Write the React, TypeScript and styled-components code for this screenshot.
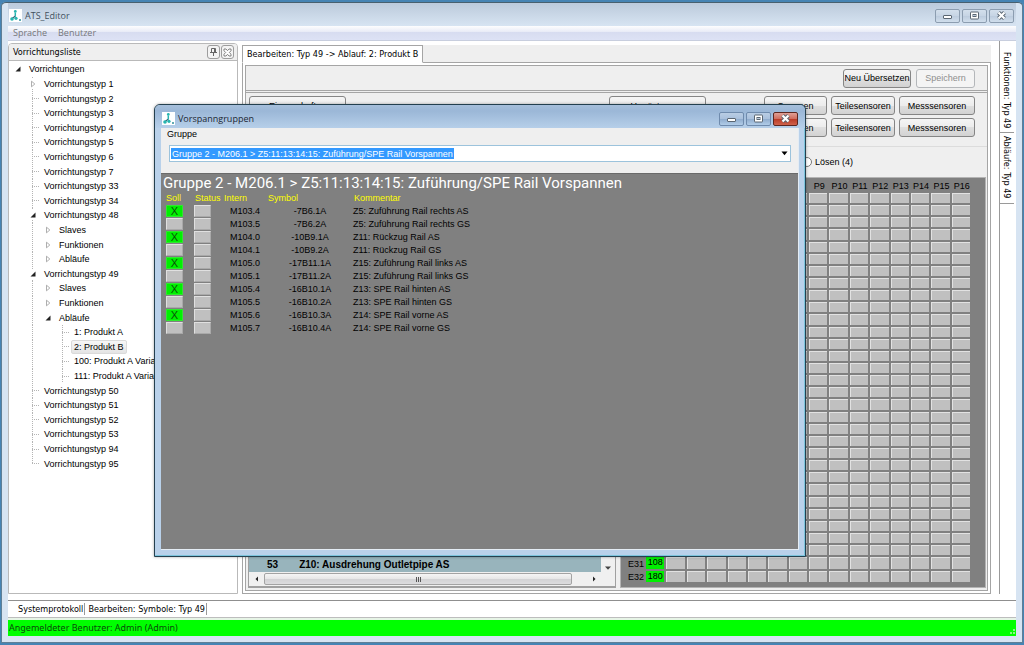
import React from "react";
import styled, { createGlobalStyle, css } from "styled-components";

const sans = `"Liberation Sans", Arial, sans-serif`;
const tahoma = `"DejaVu Sans Condensed", "DejaVu Sans", sans-serif`;
const segoe = `"Open Sans", "Noto Sans", sans-serif`;

const GlobalStyle = createGlobalStyle`
  *, *::before, *::after { box-sizing: border-box; }
  body { margin: 0; background: #4684b4; font: 9px/12px ${sans}; color: #000; }
  button, select, input { font: inherit; color: inherit; margin: 0; }
  ul { list-style: none; margin: 0; padding: 0; }
`;

/* ---------- main window ---------- */

const MainWindow = styled.div`
  position: relative;
  display: flex;
  flex-direction: column;
  min-height: 100vh;
  padding: 0 7px 7px 7px;
  border: solid #4684b4;
  border-width: 2px 1px 2px 1px;
  background: #d7e4f2;
  box-shadow: inset 0 1px 0 #48606f, inset 1px 0 0 #5f7f96, inset -1px 0 0 #5f7f96, inset 0 -1px 0 #5f7f96;
  border-radius: 6px 6px 0 0;
`;

const TitleBar = styled.header<{ $dialog?: boolean }>`
  display: flex;
  align-items: center;
  flex: none;
  gap: 3px;
  height: 23px;
  padding: 2px 2px 0 1px;
  font: 9px/14px ${segoe};
  color: #41505c;
  background: linear-gradient(#bccbdd 1px, #c5d3e3 8px, #d7e4f2);
  margin-top: 1px;
  ${(p) =>
    p.$dialog &&
    css`
      margin: 0 -6px;
      padding: 4px 7px 0 7px;
      color: #1c2733;
      border-radius: 5px 5px 0 0;
      background: linear-gradient(#a6bfdb, #9bb7d7 6px, #b6cfe9);
    `}
`;

const Title = styled.h1`
  flex: 1;
  margin: 0;
  font: inherit;
`;

const CaptionButtons = styled.div`
  display: flex;
  gap: 2px;
`;

const CaptionButton = styled.button<{ $dialog?: boolean; $close?: boolean }>`
  display: flex;
  align-items: center;
  justify-content: center;
  width: 25px;
  height: 14px;
  padding: 0;
  border: 1px solid #8c9db0;
  border-radius: 2px;
  background: linear-gradient(#d3dfec, #c6d4e4 50%, #bccbdd 50%, #d0deec);
  ${(p) =>
    p.$dialog &&
    css`
      border-color: #6f8bad;
      background: linear-gradient(#b9cde4, #a9c0dc 50%, #8fabcd 50%, #b1cce8);
    `}
  ${(p) =>
    p.$close &&
    css`
      border-color: #5d2720;
      background: linear-gradient(#e0a096, #cf6b5c 50%, #b93a26 50%, #d0624b);
    `}
`;

const MenuBar = styled.nav`
  display: flex;
  flex: none;
  gap: 11px;
  height: 15px;
  padding-left: 5px;
  background: linear-gradient(#fdfdfe, #e9ecf7 40%, #d7dcf0 42%, #dde2f5);
  border-bottom: 1px solid #c8cede;
`;

const MenuItem = styled.button`
  padding: 0;
  border: 0;
  background: none;
  font: 9px/14px ${segoe};
  color: #76777b;
`;

const Workspace = styled.main`
  display: flex;
  flex: 1;
  min-height: 0;
  background: #fff;
  padding-bottom: 6px;
`;

/* ---------- left: device list ---------- */

const DevicePanel = styled.section`
  display: flex;
  flex-direction: column;
  flex: none;
  width: 230px;
  margin: 2px 0 0;
  border: 1px solid #b9b9b9;
  border-radius: 4px 4px 0 0;
  background: #fff;
`;

const PanelHeader = styled.div`
  display: flex;
  align-items: center;
  flex: none;
  gap: 1px;
  height: 17px;
  padding: 0 3px 0 4px;
  border-bottom: 1px solid #b9b9b9;
  border-radius: 3px 3px 0 0;
  background: #efefef;
  font: 9px/14px ${tahoma};
`;

const PanelTitle = styled.h2`
  flex: 1;
  margin: 0;
  font: inherit;
`;

const PanelButton = styled.button`
  display: flex;
  align-items: center;
  justify-content: center;
  width: 13px;
  height: 14px;
  padding: 0;
  border: 1px solid #9d9d9d;
  border-radius: 3px;
  background: #f4f4f4;
`;

const Tree = styled.ul`
  display: grid;
  grid-auto-rows: 1fr;
  height: 410px;
  padding: 1px 0 0 5px;
`;

const TreeRow = styled.li<{ $level: number }>`
  display: flex;
  align-items: center;
  padding-left: ${(p) => (p.$level < 3 ? p.$level * 15 : 45)}px;
  white-space: nowrap;
  ${(p) =>
    p.$level > 0 &&
    css`
      background: repeating-linear-gradient(#b4b4b4 0 1px, #fff 1px 2px) 18px 0 / 1px 100% no-repeat;
    `}
  ${(p) =>
    p.$level > 2 &&
    css`
      background:
        repeating-linear-gradient(#b4b4b4 0 1px, #fff 1px 2px) 18px 0 / 1px 100% no-repeat,
        repeating-linear-gradient(#b4b4b4 0 1px, #fff 1px 2px) 48px 0 / 1px 100% no-repeat;
    `}
  &:last-child { background-size: 1px 50%; }
`;

const TreeMark = styled.span<{ $leaf: boolean }>`
  display: flex;
  align-items: center;
  justify-content: center;
  flex: none;
  width: 8px;
  height: 10px;
  margin-right: 4px;
  ${(p) =>
    p.$leaf
      ? css`
          margin-left: 3px;
          margin-right: 1px;
          background: repeating-linear-gradient(90deg, #b4b4b4 0 1px, #fff 1px 2px) 0 50% / 100% 1px no-repeat;
        `
      : css`
          background: #fff;
        `}
`;

const TreeLabel = styled.button<{ $selected?: boolean }>`
  height: 14px;
  padding: 0 2px;
  border: 1px solid ${(p) => (p.$selected ? "#dadada" : "transparent")};
  border-radius: 2px;
  background: ${(p) => (p.$selected ? "linear-gradient(#f7f7f7, #e4e4e4)" : "none")};
  line-height: 12px;
`;

/* ---------- centre: editor ---------- */

const Editor = styled.section`
  display: flex;
  flex: 1;
  flex-direction: column;
  min-width: 0;
  margin: 4px 8px 0 4px;
`;

const TabStrip = styled.div`
  display: flex;
  flex: none;
  height: 18px;
  border-bottom: 1px solid #a5a5a5;
  background: #efefef;
`;

const Tab = styled.button`
  height: 18px;
  padding: 0 4px;
  border: 1px solid #a5a5a5;
  border-bottom-color: #fff;
  background: #fff;
  font: 9px/14px ${tahoma};
`;

const TabPage = styled.div`
  display: flex;
  flex: 1;
  flex-direction: column;
  padding: 2px;
  border: 1px solid #a5a5a5;
  border-top: 0;
`;

const PageFrame = styled.div`
  display: flex;
  flex: 1;
  flex-direction: column;
  border: 1px solid #a5a5a5;
  background: #efefef;
`;

const Toolbar = styled.div`
  display: flex;
  align-items: center;
  justify-content: flex-end;
  flex: none;
  gap: 5px;
  height: 27px;
  padding-right: 12px;
  border-bottom: 3px double #a5a5a5;
`;

const PushButton = styled.button<{ $width: number }>`
  width: ${(p) => p.$width}px;
  height: 19px;
  padding: 0;
  border: 1px solid #858585;
  border-radius: 3px;
  background: linear-gradient(#f5f5f5, #ececec 50%, #dfdfdf 50%, #d2d2d2);
  line-height: 16px;
  white-space: nowrap;
  &:disabled {
    border-color: #b4b7ba;
    background: #f4f4f4;
    color: #8e8e8e;
  }
`;

const Actions = styled.div`
  flex: none;
  padding-top: 3px;
  height: 53px;
`;

const ActionRow = styled.div`
  display: flex;
  align-items: flex-start;
  gap: 4px;
  height: 22px;
  padding: 0 12px 0 3px;
`;

const ActionSpacer = styled.span<{ $width?: number }>`
  flex: ${(p) => (p.$width ? `0 0 ${p.$width}px` : "1")};
`;

const ModeGroup = styled.fieldset`
  display: flex;
  justify-content: flex-end;
  flex: none;
  height: 31px;
  margin: 0;
  padding: 9px 134px 0 0;
  border: 0;
  border-top: 1px solid #dcdcdc;
`;

const RadioLabel = styled.label`
  display: flex;
  align-items: center;
  gap: 3px;
`;

const Radio = styled.input`
  width: 10px;
  height: 10px;
  accent-color: #444;
`;

const Split = styled.div`
  display: flex;
  flex: 1;
  gap: 4px;
  padding: 0 1px 2px 2px;
`;

const StepPane = styled.div`
  display: flex;
  flex: 1;
  flex-direction: column;
  justify-content: flex-end;
  min-width: 0;
  border: solid #a0a0a0;
  border-width: 1px 1px 2px 1px;
  background: #f0f0f0;
`;

const StepRow = styled.div`
  display: flex;
  flex: 1;
`;

const StepList = styled.ul`
  display: flex;
  flex: 1;
  flex-direction: column;
  justify-content: flex-end;
  background: #98b4bc;
`;

const Step = styled.li`
  display: flex;
  gap: 21px;
  padding-left: 18px;
  font: bold 10px/14px ${sans};
`;

const VerticalScroll = styled.div`
  display: flex;
  align-items: flex-end;
  justify-content: center;
  flex: none;
  width: 14px;
  background: #f0f0f0;
`;

const HorizontalScroll = styled.div`
  display: flex;
  align-items: center;
  flex: none;
  height: 14px;
  padding-right: 14px;
`;

const ScrollArrow = styled.button`
  display: flex;
  align-items: center;
  justify-content: center;
  width: 15px;
  height: 12px;
  padding: 0;
  border: 0;
  background: none;
`;

const ScrollThumb = styled.div`
  display: flex;
  align-items: center;
  justify-content: center;
  flex: 1;
  height: 12px;
  margin-right: 14px;
  border: 1px solid #a3a3a3;
  border-radius: 2px;
  background: linear-gradient(#f5f5f5, #e6e6e6 50%, #d2d2d4 50%, #dcdcde);
`;

const MatrixPane = styled.div`
  flex: none;
  width: 366px;
  border: 1px solid #b4b4b4;
  background: #808080;
  padding: 1px 12px 0 5px;
`;

const Matrix = styled.table`
  width: 346px;
  height: 405px;
  table-layout: fixed;
  border-collapse: separate;
  border-spacing: 0;
  th {
    padding: 0;
    font-weight: normal;
    line-height: 10px;
    text-align: left;
  }
  thead th {
    height: 14px;
    text-align: center;
    white-space: nowrap;
  }
  th:first-child { width: 20px; padding-left: 2px; }
`;

const MatrixCell = styled.td<{ $on: boolean }>`
  padding: 0;
  border: solid #808080;
  border-width: 0 2px 2px 0;
  background: ${(p) => (p.$on ? "#00f000" : "#c0c0c0")};
  box-shadow: inset 1px 1px 0 ${(p) => (p.$on ? "#00f000" : "#e2e2e2")};
  line-height: 9px;
  text-align: center;
`;

/* ---------- right: docked tabs ---------- */

const SideTabs = styled.aside`
  display: flex;
  flex-direction: column;
  flex: none;
  width: 17px;
  padding-top: 8px;
  border-left: 1px solid #9a9a9a;
`;

const SideTab = styled.button`
  writing-mode: vertical-rl;
  width: 14px;
  padding: 3px 0 4px;
  border: 0;
  border-bottom: 1px solid #9a9a9a;
  background: none;
  font: 9px/14px ${tahoma};
  text-align: left;
`;

/* ---------- bottom ---------- */

const ProtocolTabs = styled.div`
  display: flex;
  align-items: center;
  flex: none;
  height: 18px;
  padding-left: 7px;
  border: solid #8f8f8f;
  border-width: 1px 0;
  border-bottom-color: #bdbdbd;
  background: #fff;
`;

const ProtocolTab = styled.button`
  height: 12px;
  padding: 0 1px 0 3px;
  border: 0;
  border-right: 1px solid #9a9a9a;
  background: none;
  font: 9px/12px ${tahoma};
`;

const StatusBar = styled.footer`
  display: flex;
  align-items: center;
  justify-content: space-between;
  flex: none;
  height: 18px;
  border-top: 2px solid #e6f4e6;
  background: #00ff00;
  font: 9px/14px "Noto Sans", sans-serif;
  color: #0b4a0b;
`;

const StatusText = styled.span`
  padding-left: 1px;
`;

const Grip = styled.svg`
  align-self: flex-end;
`;

/* ---------- dialog ---------- */

const Dialog = styled.section`
  position: absolute;
  left: 153px;
  top: 102px;
  width: 652px;
  height: 453px;
  display: flex;
  flex-direction: column;
  padding: 0 6px 6px;
  border: 1px solid #24404f;
  border-radius: 6px 6px 0 0;
  background: #b9d1ea;
  box-shadow: inset 0 -1px 0 #7cc4dc, inset -1px 0 0 #7cc4dc, 0 0 3px rgba(0, 0, 0, 0.35);
`;

const DialogBody = styled.div`
  display: flex;
  flex: 1;
  flex-direction: column;
  border: 1px solid #e4ecf4;
  border-width: 0 1px 1px 0;
  background: #efefef;
`;

const GroupBox = styled.div`
  display: flex;
  flex: none;
  flex-direction: column;
  gap: 5px;
  height: 45px;
  padding: 0 7px 0 6px;
`;

const Combo = styled.div`
  position: relative;
  display: flex;
  margin-left: 2px;
`;

const ComboArrow = styled.svg`
  position: absolute;
  right: 3px;
  top: 6px;
  pointer-events: none;
`;

const GroupSelect = styled.select`
  flex: 1;
  height: 17px;
  padding: 0 16px 0 2px;
  border: 1px solid #9cc3dc;
  border-radius: 0;
  appearance: none;
  color: #fff;
  background: linear-gradient(#3399ff, #3399ff) 1px 2px / 283px 11px no-repeat #fff;
  option { color: #000; }
`;

const GroupView = styled.div`
  flex: 1;
  background: #808080;
  border-top: 1px solid #6a6a6a;
`;

const GroupHeading = styled.h2`
  margin: 0;
  padding: 1px 0 0 2px;
  font: 15px/17px Roboto, ${sans};
  color: #fff;
`;

const SignalTable = styled.table`
  width: 100%;
  table-layout: fixed;
  border-collapse: collapse;
  th {
    height: 12px;
    padding: 0 0 0 1px;
    font-weight: normal;
    line-height: 12px;
    text-align: left;
    color: #ffff00;
  }
  th:first-child { padding-left: 5px; }
  td {
    height: 13px;
    padding: 0;
    line-height: 12px;
  }
`;

const Column = styled.col<{ $width?: number }>`
  width: ${(p) => (p.$width ? `${p.$width}px` : "auto")};
`;

const CenteredCell = styled.td`
  text-align: center;
`;

const StateCell = styled.td`
  &:first-child button { margin-left: 5px; }
`;

const StateButton = styled.button<{ $on?: boolean }>`
  display: block;
  width: 17px;
  height: 12px;
  padding: 0;
  border: 1px solid ${(p) => (p.$on ? "#30e830" : "#a9a9a9")};
  border-top-color: ${(p) => (p.$on ? "#30e830" : "#e0e0e0")};
  border-left-color: ${(p) => (p.$on ? "#30e830" : "#e0e0e0")};
  background: ${(p) => (p.$on ? "#00f000" : "#c0c0c0")};
  color: #0a500a;
  font-size: 11px;
  line-height: 10px;
`;

/* ---------- drawings ---------- */

const AppIcon = () => (
  <svg width="13" height="13" viewBox="0 0 13 13" aria-hidden="true">
    <rect width="13" height="13" fill="#fff" />
    <circle cx="6.3" cy="2.4" r="1.4" fill="#27b5b0" />
    <path d="M6.3 3.6V7.6" stroke="#27b5b0" strokeWidth="1.5" />
    <path d="M6.2 7.2L3 9.6" stroke="#2f5f73" strokeWidth="1.2" />
    <circle cx="3" cy="10" r="1.8" fill="#27b5b0" />
    <circle cx="7" cy="9.3" r="1.6" fill="#27b5b0" />
    <circle cx="11" cy="11" r="1" fill="#2f8f9a" />
  </svg>
);

const MinimizeIcon = () => (
  <svg width="11" height="9" viewBox="0 0 11 9" aria-hidden="true">
    <rect x="1.5" y="4.5" width="8" height="3" rx="0.5" fill="#fff" stroke="#5a6672" />
  </svg>
);

const MaximizeIcon = () => (
  <svg width="11" height="9" viewBox="0 0 11 9" aria-hidden="true">
    <rect x="1.5" y="1" width="8" height="7" rx="0.5" fill="#fff" stroke="#5a6672" />
    <rect x="4" y="3.5" width="3" height="2" fill="#b8c8da" stroke="#5a6672" />
  </svg>
);

const CloseIcon = () => (
  <svg width="11" height="9" viewBox="0 0 11 9" aria-hidden="true">
    <path d="M2.5 1.5L8.5 7.5M8.5 1.5L2.5 7.5" stroke="#5a6672" strokeWidth="4" />
    <path d="M2.5 1.5L8.5 7.5M8.5 1.5L2.5 7.5" stroke="#fff" strokeWidth="2.2" />
  </svg>
);

const PanelCloseIcon = () => (
  <svg width="9" height="9" viewBox="0 0 9 9" aria-hidden="true">
    <path
      d="M1 1H3L4.5 2.7L6 1H8V2.8L6.3 4.5L8 6.2V8H6L4.5 6.3L3 8H1V6.2L2.7 4.5L1 2.8Z"
      fill="#fff"
      stroke="#777"
      strokeWidth="0.9"
    />
  </svg>
);

const PinIcon = () => (
  <svg width="9" height="10" viewBox="0 0 9 10" aria-hidden="true">
    <path d="M2.5 5.5V1.5H6.5V5.5M5.5 1.5V5.5M1 5.5H8M4.5 5.5V9" fill="none" stroke="#666" />
  </svg>
);

const Triangle = ({ dir }: { dir: "open" | "closed" | "down" | "left" | "right" }) => {
  const shape = {
    open: <path d="M6.5 1.5V6.5H1.5Z" fill="#222" />,
    closed: <path d="M2.5 1.2L5.8 4L2.5 6.8Z" fill="#fff" stroke="#999" strokeWidth="0.8" />,
    down: <path d="M1 2.5H7L4 5.8Z" fill="#444" />,
    left: <path d="M5 1.5V6.5L2.5 4Z" fill="#222" />,
    right: <path d="M3 1.5V6.5L5.5 4Z" fill="#222" />,
  }[dir];
  return (
    <svg width="8" height="8" viewBox="0 0 8 8" aria-hidden="true">
      {shape}
    </svg>
  );
};

/* ---------- data ---------- */

type Node = { level: number; label: string; mark?: "open" | "closed"; selected?: boolean };

const leaf = (n: number): Node => ({ level: 1, label: `Vorrichtungstyp ${n}` });
const branch = (n: number): Node => ({ ...leaf(n), mark: "open" });

const nodes: Node[] = [
  { level: 0, label: "Vorrichtungen", mark: "open" },
  { ...leaf(1), mark: "closed" },
  ...[2, 3, 4, 5, 6, 7, 33, 34].map(leaf),
  branch(48),
  { level: 2, label: "Slaves", mark: "closed" },
  { level: 2, label: "Funktionen", mark: "closed" },
  { level: 2, label: "Abläufe", mark: "closed" },
  branch(49),
  { level: 2, label: "Slaves", mark: "closed" },
  { level: 2, label: "Funktionen", mark: "closed" },
  { level: 2, label: "Abläufe", mark: "open" },
  { level: 3, label: "1: Produkt A" },
  { level: 3, label: "2: Produkt B", selected: true },
  { level: 3, label: "100: Produkt A Variante 1" },
  { level: 3, label: "111: Produkt A Variante 2" },
  ...[50, 51, 52, 53, 94, 95].map(leaf),
];

const signals: [string, string, string, boolean][] = [
  ["M103.4", "-7B6.1A", "Z5: Zuführung Rail rechts AS", true],
  ["M103.5", "-7B6.2A", "Z5: Zuführung Rail rechts GS", false],
  ["M104.0", "-10B9.1A", "Z11: Rückzug Rail AS", true],
  ["M104.1", "-10B9.2A", "Z11: Rückzug Rail GS", false],
  ["M105.0", "-17B11.1A", "Z15: Zuführung Rail links AS", true],
  ["M105.1", "-17B11.2A", "Z15: Zuführung Rail links GS", false],
  ["M105.4", "-16B10.1A", "Z13: SPE Rail hinten AS", true],
  ["M105.5", "-16B10.2A", "Z13: SPE Rail hinten GS", false],
  ["M105.6", "-16B10.3A", "Z14: SPE Rail vorne AS", true],
  ["M105.7", "-16B10.4A", "Z14: SPE Rail vorne GS", false],
];

const groupName = "Gruppe 2 - M206.1 > Z5:11:13:14:15: Zuführung/SPE Rail Vorspannen";
const columns = Array.from({ length: 16 }, (_, i) => i + 1);
const rows = Array.from({ length: 32 }, (_, i) => i + 1);
const assigned: Record<number, string> = { 31: "108", 32: "180" };

const Caption = ({ dialog }: { dialog?: boolean }) => (
  <CaptionButtons>
    <CaptionButton $dialog={dialog} aria-label="Minimieren"><MinimizeIcon /></CaptionButton>
    <CaptionButton $dialog={dialog} aria-label="Maximieren"><MaximizeIcon /></CaptionButton>
    <CaptionButton $dialog={dialog} $close={dialog} aria-label="Schließen"><CloseIcon /></CaptionButton>
  </CaptionButtons>
);

export default function App() {
  return (
    <>
      <GlobalStyle />
      <MainWindow>
        <TitleBar>
          <AppIcon />
          <Title>ATS_Editor</Title>
          <Caption />
        </TitleBar>
        <MenuBar>
          <MenuItem>Sprache</MenuItem>
          <MenuItem>Benutzer</MenuItem>
        </MenuBar>

        <Workspace>
          <DevicePanel>
            <PanelHeader>
              <PanelTitle>Vorrichtungsliste</PanelTitle>
              <PanelButton aria-label="Anheften"><PinIcon /></PanelButton>
              <PanelButton aria-label="Liste schließen"><PanelCloseIcon /></PanelButton>
            </PanelHeader>
            <Tree>
              {nodes.map((n, i) => (
                <TreeRow key={i} $level={n.level}>
                  <TreeMark $leaf={!n.mark}>{n.mark && <Triangle dir={n.mark} />}</TreeMark>
                  <TreeLabel $selected={n.selected}>{n.label}</TreeLabel>
                </TreeRow>
              ))}
            </Tree>
          </DevicePanel>

          <Editor>
            <TabStrip>
              <Tab>Bearbeiten: Typ 49 -&gt; Ablauf: 2: Produkt B</Tab>
            </TabStrip>
            <TabPage>
              <PageFrame>
                <Toolbar>
                  <PushButton $width={68}>Neu Übersetzen</PushButton>
                  <PushButton $width={59} disabled>Speichern</PushButton>
                </Toolbar>
                <Actions>
                  <ActionRow>
                    <PushButton $width={97}>Eigenschaften</PushButton>
                    <ActionSpacer />
                    <PushButton $width={97}>Umrüstungen</PushButton>
                    <ActionSpacer $width={50} />
                    <PushButton $width={63}>Spannen</PushButton>
                    <PushButton $width={64}>Teilesensoren</PushButton>
                    <PushButton $width={76}>Messsensoren</PushButton>
                  </ActionRow>
                  <ActionRow>
                    <ActionSpacer />
                    <PushButton $width={63}>Spannen</PushButton>
                    <PushButton $width={64}>Teilesensoren</PushButton>
                    <PushButton $width={76}>Messsensoren</PushButton>
                  </ActionRow>
                </Actions>
                <ModeGroup>
                  <RadioLabel>
                    <Radio type="radio" name="mode" />
                    Lösen (4)
                  </RadioLabel>
                </ModeGroup>
                <Split>
                  <StepPane>
                    <StepRow>
                      <StepList>
                        <Step>
                          <span>53</span>
                          <span>Z10: Ausdrehung Outletpipe AS</span>
                        </Step>
                      </StepList>
                      <VerticalScroll><Triangle dir="down" /></VerticalScroll>
                    </StepRow>
                    <HorizontalScroll>
                      <ScrollArrow aria-label="Nach links"><Triangle dir="left" /></ScrollArrow>
                      <ScrollThumb>
                        <svg width="7" height="5" viewBox="0 0 7 5" aria-hidden="true">
                          <path d="M1.5 0V5M3.5 0V5M5.5 0V5" stroke="#555" />
                        </svg>
                      </ScrollThumb>
                      <ScrollArrow aria-label="Nach rechts"><Triangle dir="right" /></ScrollArrow>
                    </HorizontalScroll>
                  </StepPane>
                  <MatrixPane>
                    <Matrix>
                      <thead>
                        <tr>
                          <th />
                          {columns.map((c) => <th key={c}>P{c}</th>)}
                        </tr>
                      </thead>
                      <tbody>
                        {rows.map((r) => (
                          <tr key={r}>
                            <th>E{r}</th>
                            {columns.map((c) => (
                              <MatrixCell key={c} $on={c === 1 && r in assigned}>
                                {c === 1 ? assigned[r] : null}
                              </MatrixCell>
                            ))}
                          </tr>
                        ))}
                      </tbody>
                    </Matrix>
                  </MatrixPane>
                </Split>
              </PageFrame>
            </TabPage>
          </Editor>

          <SideTabs>
            <SideTab>Funktionen: Typ 49</SideTab>
            <SideTab>Abläufe: Typ 49</SideTab>
          </SideTabs>
        </Workspace>

        <ProtocolTabs>
          <ProtocolTab>Systemprotokoll</ProtocolTab>
          <ProtocolTab>Bearbeiten: Symbole: Typ 49</ProtocolTab>
        </ProtocolTabs>
        <StatusBar>
          <StatusText>Angemeldeter Benutzer: Admin (Admin)</StatusText>
          <Grip width="8" height="8" viewBox="0 0 8 8" aria-hidden="true">
            <path d="M5 1h2v2H5zM5 4h2v2H5zM2 4h2v2H2z" fill="#8cf08c" />
          </Grip>
        </StatusBar>

        <Dialog role="dialog" aria-labelledby="group-title">
          <TitleBar $dialog>
            <AppIcon />
            <Title id="group-title">Vorspanngruppen</Title>
            <Caption dialog />
          </TitleBar>
          <DialogBody>
            <GroupBox>
              <label htmlFor="group">Gruppe</label>
              <Combo>
                <GroupSelect id="group" defaultValue="2">
                  <option value="2">{groupName}</option>
                </GroupSelect>
                <ComboArrow width="7" height="5" viewBox="0 0 7 5" aria-hidden="true">
                  <path d="M0.5 0.5H6.5L3.5 4.2Z" fill="#000" />
                </ComboArrow>
              </Combo>
            </GroupBox>
            <GroupView>
              <GroupHeading>{groupName}</GroupHeading>
              <SignalTable>
                <colgroup>
                  <Column $width={33} />
                  <Column $width={29} />
                  <Column $width={44} />
                  <Column $width={86} />
                  <Column />
                </colgroup>
                <thead>
                  <tr>
                    <th>Soll</th>
                    <th>Status</th>
                    <th>Intern</th>
                    <th>Symbol</th>
                    <th>Kommentar</th>
                  </tr>
                </thead>
                <tbody>
                  {signals.map(([intern, symbol, comment, on]) => (
                    <tr key={intern}>
                      <StateCell>
                        <StateButton $on={on} aria-label={`Soll ${intern}`}>{on ? "X" : ""}</StateButton>
                      </StateCell>
                      <StateCell>
                        <StateButton aria-label={`Status ${intern}`} />
                      </StateCell>
                      <CenteredCell>{intern}</CenteredCell>
                      <CenteredCell>{symbol}</CenteredCell>
                      <td>{comment}</td>
                    </tr>
                  ))}
                </tbody>
              </SignalTable>
            </GroupView>
          </DialogBody>
        </Dialog>
      </MainWindow>
    </>
  );
}
